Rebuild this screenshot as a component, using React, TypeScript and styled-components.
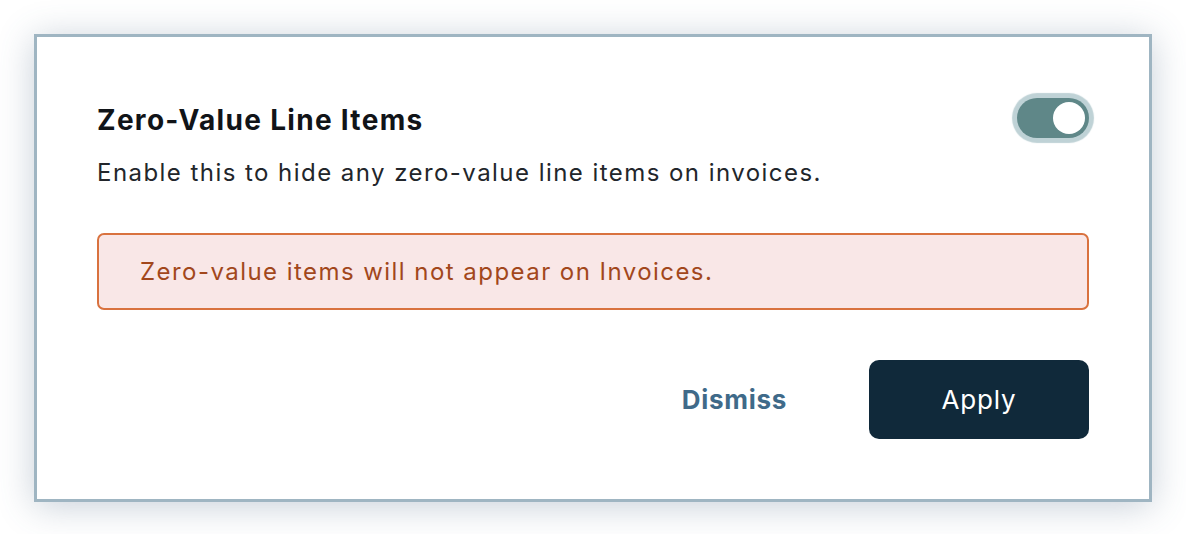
import * as React from 'react';
import styled, { createGlobalStyle } from 'styled-components';

const GlobalStyle = createGlobalStyle`
  html, body {
    margin: 0;
    padding: 0;
    background: #ffffff;
  }
  body {
    font-family: Inter, "Noto Sans", sans-serif;
    -webkit-font-smoothing: antialiased;
  }
`;

const Page = styled.div`
  padding: 34px;
`;

const Card = styled.section`
  width: 1118px;
  box-sizing: border-box;
  border: 3px solid #9fb5c2;
  background: #ffffff;
  box-shadow: 0 4px 34px rgba(70, 95, 125, 0.3);
  padding: 61px 60px 60px 60px;
`;

const Header = styled.div`
  display: flex;
  justify-content: space-between;
  align-items: flex-start;
`;

const TextBlock = styled.div`
  padding-top: 5px;
`;

const Title = styled.h2`
  margin: 0;
  font-size: 28px;
  line-height: 34px;
  font-weight: 700;
  color: #111418;
  letter-spacing: 1.3px;
`;

const Description = styled.p`
  margin: 20px 0 0 0;
  font-size: 24px;
  line-height: 32px;
  color: #22262b;
  letter-spacing: 1.45px;
`;

const Track = styled.button<{ $on: boolean }>`
  position: relative;
  width: 72px;
  height: 40px;
  border: none;
  border-radius: 20px;
  padding: 0;
  cursor: pointer;
  background: ${p => (p.$on ? '#5f8788' : '#c9d3d8')};
  box-shadow: 0 0 1px 5px #bfd2d6;
`;

const Knob = styled.span<{ $on: boolean }>`
  position: absolute;
  top: 4px;
  left: ${p => (p.$on ? '36px' : '4px')};
  width: 32px;
  height: 32px;
  border-radius: 50%;
  background: #ffffff;
`;

const Alert = styled.div`
  margin-top: 44px;
  height: 77px;
  box-sizing: border-box;
  border: 2px solid #d9723f;
  border-radius: 7px;
  background: #f9e7e7;
  display: flex;
  align-items: center;
  padding-left: 41px;
  font-size: 24px;
  color: #a2471c;
  letter-spacing: 1.45px;
`;

const Actions = styled.div`
  margin-top: 50px;
  display: flex;
  justify-content: flex-end;
  align-items: center;
  gap: 82px;
`;

const TextButton = styled.button`
  border: none;
  background: none;
  padding: 0;
  font-family: inherit;
  font-size: 26px;
  font-weight: 700;
  color: #3f6a89;
  letter-spacing: 0.7px;
  cursor: pointer;
`;

const PrimaryButton = styled.button`
  width: 220px;
  height: 79px;
  border: none;
  border-radius: 10px;
  background: #10293a;
  color: #ffffff;
  font-family: inherit;
  font-size: 26px;
  font-weight: 400;
  letter-spacing: 0.8px;
  cursor: pointer;
`;

export default function App() {
  const [on, setOn] = React.useState(true);
  return (
    <Page>
      <GlobalStyle />
      <Card>
        <Header>
          <TextBlock>
            <Title>Zero-Value Line Items</Title>
            <Description>Enable this to hide any zero-value line items on invoices.</Description>
          </TextBlock>
          <Track $on={on} onClick={() => setOn(!on)} aria-label="Toggle zero-value line items">
            <Knob $on={on} />
          </Track>
        </Header>
        <Alert>Zero-value items will not appear on Invoices.</Alert>
        <Actions>
          <TextButton>Dismiss</TextButton>
          <PrimaryButton>Apply</PrimaryButton>
        </Actions>
      </Card>
    </Page>
  );
}
